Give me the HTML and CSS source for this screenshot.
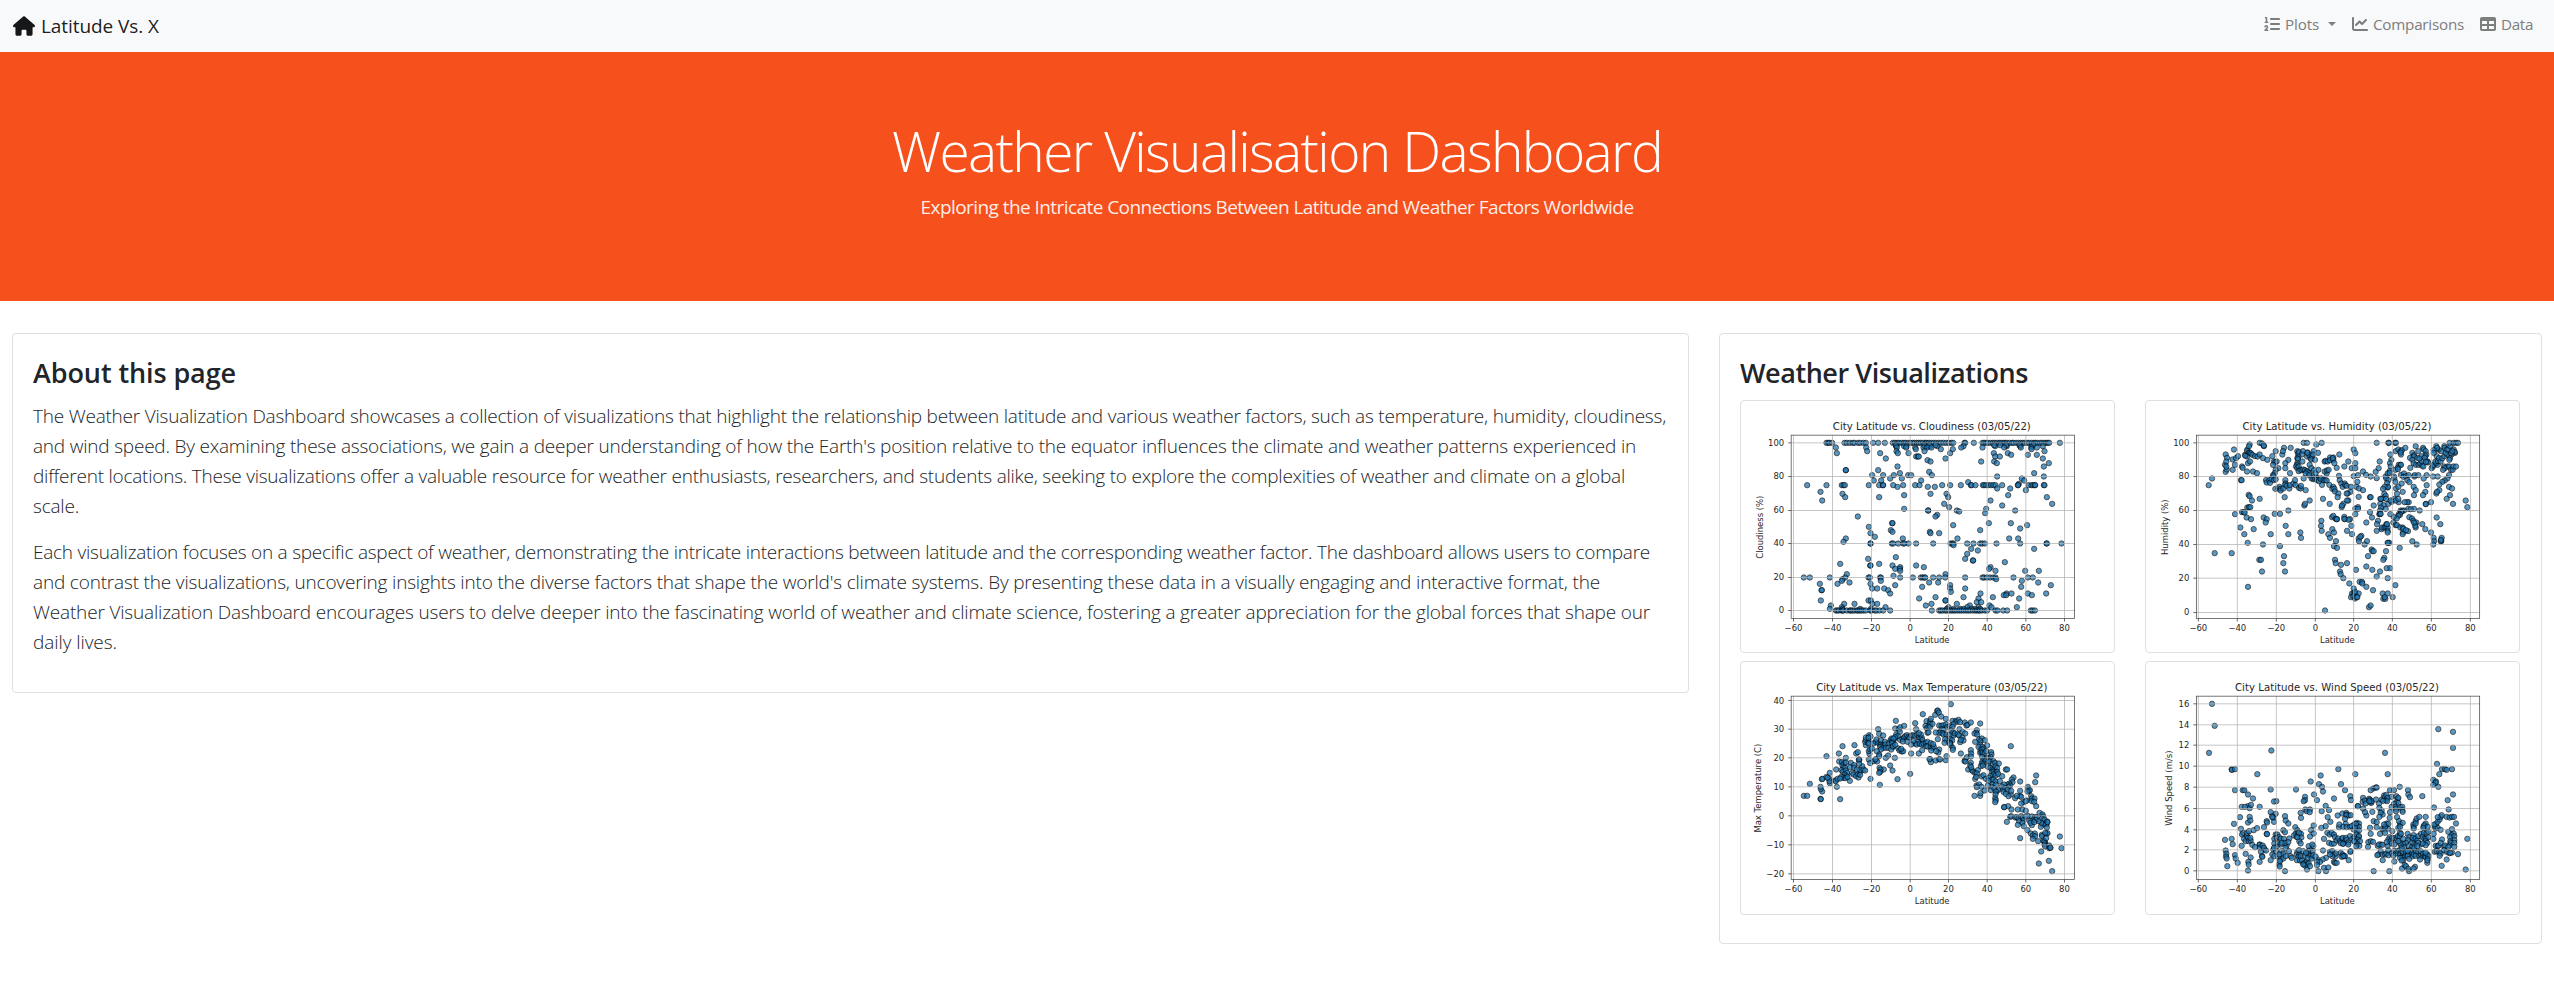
FILE: index.html
```html
<!DOCTYPE html>
<html lang="en">
<head>
<meta charset="utf-8">
<title>Latitude Vs. X</title>
<link rel="stylesheet" href="styles.css">
</head>
<body>
<nav class="navbar">
  <a class="brand"><svg class="icon-home" viewBox="0 0 576 512"><path d="M575.8 255.5c0 18-15 32.1-32 32.1h-32l.7 160.2c0 2.7-.2 5.4-.5 8.1V472c0 22.1-17.9 40-40 40H456c-1.1 0-2.2 0-3.3-.1c-1.4 .1-2.8 .1-4.2 .1H416 392c-22.1 0-40-17.9-40-40V448 384c0-17.7-14.3-32-32-32H256c-17.7 0-32 14.3-32 32v64 24c0 22.1-17.9 40-40 40H160 128.1c-1.5 0-3-.1-4.5-.2c-1.2 .1-2.4 .2-3.6 .2H104c-22.1 0-40-17.9-40-40V360c0-.9 0-1.9 .1-2.8V287.6H32c-18 0-32-14-32-32.1c0-9 3-17 10-24L266.4 8c7-7 15-8 22-8s15 2 21 7L564.8 231.5c8 7 12 15 11 24z"/></svg><span data-w="118">Latitude Vs. X</span></a>
  <div class="links">
    <a class="link"><svg class="icon" viewBox="0 0 512 512"><path d="M24 56c0-13.3 10.7-24 24-24H80c13.3 0 24 10.7 24 24V176h16c13.3 0 24 10.7 24 24s-10.7 24-24 24H40c-13.3 0-24-10.7-24-24s10.7-24 24-24H56V80H48C34.7 80 24 69.3 24 56zM86.7 341.2c-6.5-7.4-18.3-6.9-24 1.2L51.5 357.9c-7.7 10.8-22.7 13.3-33.5 5.6s-13.3-22.7-5.6-33.5l11.1-15.6c23.7-33.2 72.3-35.6 99.2-4.9c21.3 24.4 20.8 60.9-1.1 84.7L86.8 432H120c13.3 0 24 10.7 24 24s-10.7 24-24 24H32c-9.5 0-18.2-5.6-22-14.4s-2.1-18.9 4.3-25.9l72-78c5.3-5.8 5.4-14.6 .3-20.5zM224 64H480c17.7 0 32 14.3 32 32s-14.3 32-32 32H224c-17.7 0-32-14.3-32-32s14.3-32 32-32zm0 160H480c17.7 0 32 14.3 32 32s-14.3 32-32 32H224c-17.7 0-32-14.3-32-32s14.3-32 32-32zm0 160H480c17.7 0 32 14.3 32 32s-14.3 32-32 32H224c-17.7 0-32-14.3-32-32s14.3-32 32-32z"/></svg><span data-w="34">Plots</span><i class="caret"></i></a>
    <a class="link"><svg class="icon" viewBox="0 0 512 512"><path d="M64 64c0-17.7-14.3-32-32-32S0 46.3 0 64V400c0 44.2 35.8 80 80 80H480c17.7 0 32-14.3 32-32s-14.3-32-32-32H80c-8.8 0-16-7.2-16-16V64zm406.6 86.6c12.5-12.5 12.5-32.8 0-45.3s-32.8-12.5-45.3 0L320 210.7l-57.4-57.4c-12.5-12.5-32.8-12.5-45.3 0l-112 112c-12.5 12.5-12.5 32.8 0 45.3s32.8 12.5 45.3 0L240 221.3l57.4 57.4c12.5 12.5 32.8 12.5 45.3 0l128-128z"/></svg><span data-w="91">Comparisons</span></a>
    <a class="link"><svg class="icon" viewBox="0 0 512 512"><path d="M64 256V160H224v96H64zm0 64H224v96H64V320zm224 96V320H448v96H288zM448 256H288V160H448v96zM64 32C28.7 32 0 60.7 0 96V416c0 35.3 28.7 64 64 64H448c35.3 0 64-28.7 64-64V96c0-35.3-28.7-64-64-64H64z"/></svg><span data-w="32">Data</span></a>
  </div>
</nav>
<header class="hero">
  <h1><span data-w="770">Weather Visualisation Dashboard</span></h1>
  <p><span data-w="713">Exploring the Intricate Connections Between Latitude and Weather Factors Worldwide</span></p>
</header>
<main class="columns">
  <section class="card about">
    <h2><span data-w="203">About this page</span></h2>
    <p>
      <span data-w="1633">The Weather Visualization Dashboard showcases a collection of visualizations that highlight the relationship between latitude and various weather factors, such as temperature, humidity, cloudiness,</span><br>
      <span data-w="1603">and wind speed. By examining these associations, we gain a deeper understanding of how the Earth's position relative to the equator influences the climate and weather patterns experienced in</span><br>
      <span data-w="1592">different locations. These visualizations offer a valuable resource for weather enthusiasts, researchers, and students alike, seeking to explore the complexities of weather and climate on a global</span><br>
      <span data-w="46">scale.</span>
    </p>
    <p>
      <span data-w="1617">Each visualization focuses on a specific aspect of weather, demonstrating the intricate interactions between latitude and the corresponding weather factor. The dashboard allows users to compare</span><br>
      <span data-w="1567">and contrast the visualizations, uncovering insights into the diverse factors that shape the world's climate systems. By presenting these data in a visually engaging and interactive format, the</span><br>
      <span data-w="1617">Weather Visualization Dashboard encourages users to delve deeper into the fascinating world of weather and climate science, fostering a greater appreciation for the global forces that shape our</span><br>
      <span data-w="84">daily lives.</span>
    </p>
  </section>
  <section class="card visuals">
    <h2><span data-w="288">Weather Visualizations</span></h2>
    <div class="grid">
      <div class="thumb"><svg id="cloudiness" viewBox="32.5 17.5 1119 754.5"></svg></div>
      <div class="thumb"><svg id="humidity" viewBox="48 17.5 1119 754.5"></svg></div>
      <div class="thumb"><svg id="temperature" viewBox="32.5 22.5 1119 754.5"></svg></div>
      <div class="thumb"><svg id="wind" viewBox="48 22.5 1119 754.5"></svg></div>
    </div>
  </section>
</main>
<script src="charts.js"></script>
</body>
</html>
```
FILE: styles.css
```css
* { box-sizing: border-box; }
body { margin: 0; background: #fff; color: #212529; font-family: "Open Sans", "Noto Sans", sans-serif; font-size: 16px; line-height: 1.5; }
.navbar { height: 52px; padding: 0 21px 0 13px; background: #f8f9fa; display: flex; align-items: center; justify-content: space-between; }
.brand { display: flex; align-items: center; gap: 6px; font-size: 19px; line-height: 30px; color: rgba(0, 0, 0, .9); white-space: nowrap; padding-bottom: 1px; }
.icon-home { width: 22px; height: 20px; fill: #161719; }
.links { display: flex; gap: 16px; padding-bottom: 3px; }
.link { display: flex; align-items: center; gap: 5px; color: #7c7d7d; font-size: 15.2px; white-space: nowrap; }
.icon { width: 16px; height: 16px; fill: currentColor; }
.caret { border: 4px solid transparent; border-top: 4.5px solid currentColor; border-bottom: 0; margin: 0 0 0 4px; }
.hero { height: 249px; background: #f6511d; color: #fff; text-align: center; padding-top: 65px; white-space: nowrap; }
.hero h1 { margin: 0 0 8px; font-size: 55px; font-weight: 300; line-height: 67px; }
.hero p { margin: 0; font-size: 19px; font-weight: 400; line-height: 30px; color: rgba(255, 255, 255, .92); }
.columns { display: flex; align-items: flex-start; gap: 30px; padding: 32px 12px 0; }
.card { border: 1px solid #dfdfdf; border-radius: 4px; padding: 20px; }
.card h2 { margin: 0 0 10.4px; padding-top: 1.6px; font-size: 27px; font-weight: 600; line-height: 33.6px; white-space: nowrap; }
.about { width: 1677px; height: 360px; }
.about p { margin: 0 0 16px; padding-top: 1.5px; height: 120px; font-size: 19px; font-weight: 300; line-height: 30px; white-space: nowrap; }
.visuals { width: 823px; height: 611px; }
.grid { display: grid; grid-template-columns: 375px 375px; column-gap: 30px; row-gap: 8px; }
.thumb { border: 1px solid #dfdfdf; border-radius: 4px; height: 253.5px; display: flex; }
.thumb svg { width: 100%; height: 100%; font-family: "DejaVu Sans", sans-serif; }
.tick { font-size: 25.4px; fill: #262626; }
.title { font-size: 30.4px; fill: #262626; }
.gridline { stroke: #b0b0b0; stroke-width: 2.2; }
.mark { stroke: #333; stroke-width: 2.2; }
.frame { fill: none; stroke: #444; stroke-width: 2.2; }
.dot { fill: #1f77b4; stroke: #000; stroke-width: 2.5; opacity: .75; }
```
FILE: charts.js
```js
document.querySelectorAll('[data-w]').forEach(el => {
  const extra = +el.dataset.w - el.getBoundingClientRect().width;
  el.style.letterSpacing = (extra / el.textContent.length) + 'px';
});

const NS = 'http://www.w3.org/2000/svg';
function add(svg, tag, attrs, text) {
  const el = document.createElementNS(NS, tag);
  for (const k in attrs) el.setAttribute(k, attrs[k]);
  if (text !== undefined) el.textContent = text;
  svg.appendChild(el);
  return el;
}

// Points are rows of "y:x x x".
function byRow(src) {
  const out = [];
  src.trim().split(/\n/).forEach(row => {
    const [y, xs] = row.trim().split(':');
    xs.trim().split(/\s+/).forEach(x => out.push([+x, +y]));
  });
  return out;
}

function chart(id, c) {
  const svg = document.getElementById(id);
  const { left, top, ticksX, ticksY } = c;
  const right = left + 850, bottom = top + 550, mid = left + 422;
  c.points.forEach(([x, y]) => add(svg, 'circle', { cx: x, cy: y, r: 8, class: 'dot' }));
  ticksX.forEach((x, i) => {
    add(svg, 'path', { d: `M${x} ${top}V${bottom}`, class: 'gridline' });
    add(svg, 'path', { d: `M${x} ${bottom}v9`, class: 'mark' });
    add(svg, 'text', { x, y: bottom + 37, 'text-anchor': 'middle', class: 'tick' }, String(-60 + 20 * i).replace('-', '\u2212'));
  });
  ticksY.forEach(([y, label]) => {
    add(svg, 'path', { d: `M${left} ${y}H${right}`, class: 'gridline' });
    add(svg, 'path', { d: `M${left} ${y}h-9`, class: 'mark' });
    add(svg, 'text', { x: left - 21, y: y + 9, 'text-anchor': 'end', class: 'tick' }, label);
  });
  add(svg, 'rect', { x: left, y: top, width: 850, height: 550, class: 'frame' });
  add(svg, 'text', { x: mid, y: top - 16, 'text-anchor': 'middle', textLength: c.titleWidth, class: 'title' }, c.title);
  add(svg, 'text', { x: mid + 1, y: bottom + 73, 'text-anchor': 'middle', class: 'tick' }, 'Latitude');
  add(svg, 'text', { transform: `translate(${c.labelX} ${top + 276}) rotate(-90)`, 'text-anchor': 'middle', class: 'tick' }, c.label);
}

const X1 = [190, 307, 424, 540, 655, 771, 887, 1003];
const X2 = [205, 322, 439, 556, 671, 787, 904, 1021];

chart('cloudiness', {
  left: 183, top: 120, ticksX: X1, labelX: 98, label: 'Cloudiness (%)',
  title: 'City Latitude vs. Cloudiness (03/05/22)', titleWidth: 594,
  ticksY: [[143, '100'], [244, '80'], [346, '60'], [445, '40'], [547, '20'], [646, '0']],
  points: byRow(`
143:289 294 298 306 343 350 359 368 373 384 390 400 407 429 444 464 488 494 501 506 514 521 526 534 541 547 553 560 566 572 579 586 590 596 603 610 617 625 632 640 648 656 664 669 703 705 731 757 762 768 773 781 788 794 801 808 813 820 825 830 838 846 850 858 865 872 878 884 891 897 905 912 916 922 930 936 942 948 953 957 989
153:498 522 529 584 588 593 600 622 700 795 830 870 905 938
150:497 582 598 616 792 810 828 868 910
157:317 408 500 528 555 580 591 604 693 757 822 872 903 920
162:557 632 668 904
168:411 499 583 943
174:320 450 503 535 660 791 833
179:843 893 920
184:558 563 566 795 809
190:467 646 938
195:592
199:601 753 792
204:800 956
214:502 941
225:347 347 444
230:597
234:509 912
240:426 459 491 534 543 605
244:801 941
250:480 515 875
256:431 453 573 882
261:714
266:866
270:231 289 335 340 344 416 447 458 459 489 519 555 568 636 660 692 722 724 736 758 762 768 775 783 790 796 816 863 864 895 904 909 914 915 941 943
275:502 593 614
280:801 840
285:887
290:271
296:337 601 649
300:522 834
306:345 447 654 950
316:276 781
326:642 966
331:816
336:657
341:522 768
346:594 594 680 855
349:687
354:765
359:621
364:383 616
384:486 487 776 842
390:669 891
395:416
400:870
405:482 750
410:487 599
414:421 601 627
425:434
430:347 518 682 837 864
440:340
445:421 421 485 489 504 519 523 535 558 609 661 667 670 711 730 750 756 764 799 870 949 950 994
450:670
461:723 912
466:743
476:711
486:497
491:414 705
496:728 729
501:824
506:330 447
511:420 421 487 558
516:510 581 781
521:495 509 777
527:510 796 885 926
537:350 646
542:490
547:221 239 299 345 415 419 450 452 510 548 572 577 583 585 609 627 645 705 757 762 770 779 789 796 850 893 908
552:337 798
557:335 452 875
562:358 597 624 924
566:269 322 421
570:495 660 962
575:576 873
580:426 441 462 660 705
585:274 275 474
590:662
595:480 751 829 844 893 948
600:821 828 905
606:616 700 788
610:567 745 867
616:272 415 422 646 646
621:740 753
626:342 373 427 441 604 680
631:302 587 719 778
636:335 466 655 711 745 784 860
641:299 337 390 422 650 670 690 700 725 735 750
646:317 321 326 334 337 340 350 359 362 367 373 380 384 389 394 400 407 420 424 434 439 448 459 480 605 627 632 637 645 650 657 663 669 674 681 688 694 701 708 714 720 728 735 740 745 749 755 764 771 796 802 819 831 902 907 914`)
});

// Humidity, temperature and wind points are given as x,y pairs.
const pairs = s => s.trim().split(/\s+/).map(p => p.split(',').map(Number));

chart('humidity', {
  left: 199, top: 120, ticksX: X2, labelX: 113, label: 'Humidity (%)',
  title: 'City Latitude vs. Humidity (03/05/22)', titleWidth: 567,
  ticksY: [[143, '100'], [244, '80'], [346, '60'], [448, '40'], [549, '20'], [652, '0']],
  points: pairs(`
236,270 246,250 254,474 305,474 312,163 287,178 291,188 285,209 289,199 287,230 290,223 289,214 308,193 318,189 324,183 315,209 308,224 336,214 338,218 333,255 335,255 351,229 352,163 359,148 357,153 345,179 351,168 356,173 360,173 363,175 351,184 346,182 367,179 375,183 383,184 389,178 399,189 412,194 389,143 396,145 402,153 401,151 354,204 360,199 369,229 381,234 356,299 359,303 366,316 389,311 352,337 357,336 361,336 336,351 341,351 344,352 315,357 350,367 363,372 401,367 410,372 407,382 331,397 343,417 371,402 353,443 422,417 399,448 388,494 393,494 396,529 354,575
427,183 437,168 432,199 436,201 440,199 429,209 445,219 437,224 434,234 429,240 431,243 408,255 410,262 418,255 420,263 425,252 432,255 437,252 436,281 445,280 448,275 452,281 452,286 460,280 466,255 467,265 464,306 457,178 462,158 459,168 482,158 475,194 466,204 466,219 480,234 465,268 470,272 478,280 480,270 490,265 495,255 497,270 507,278 512,280 513,272 527,285 434,356 450,356 475,346 467,392 475,417 450,453 462,483 460,504 465,529 511,412 513,428 523,331 525,326 539,316 521,143 531,143 575,143 559,148
502,168 504,175 507,170 519,168 516,178 505,184 502,189 504,192 517,199 502,204 501,209 498,214 502,219 506,214 510,224 506,228 514,225 520,223 525,225 530,228 534,229 537,234 521,250 527,235 531,184 533,172 538,180 532,173 542,190 547,184 551,168 549,178 544,193 555,194 564,173 539,209 544,219 552,225 557,234 565,224 548,244 538,240 545,250 550,252 555,251 560,248 566,250 575,250 576,269 561,255 567,258 572,251 581,255 586,255 590,256 590,235 584,229 591,226 596,224 584,199 587,197 593,199 600,187 600,195 610,187 610,194 608,189 613,204 620,218 628,178 643,214 655,199 627,242 629,255 634,265 638,275 644,265 646,270 650,272 661,290 663,275 653,295 650,295 598,269 610,275 607,281 613,281 615,289 625,295 623,306 579,311 599,326 655,316 651,316 640,326 635,336 636,331
671,163 676,174 665,219 676,204 676,219 671,243 684,240 682,260 679,275 687,280 699,285 686,305 720,306 722,306 684,336 676,340 731,331 720,351 676,357 684,341 699,229 708,239 722,244 740,249 737,230 746,219 749,199 740,143 775,143 777,143 795,143 798,143 781,178 784,194 780,204 782,214 779,228 767,244 769,250 775,255 773,235 779,233 792,244 793,250 796,260 771,264 773,277 774,275 764,275 759,281 763,296 767,302 758,310 768,311 751,311 753,311 751,326 761,330 767,341 775,326 785,320 793,311 782,316 806,321 797,316 805,311 801,296 798,280 805,275 815,265 813,239 822,235 820,245 828,243 836,240 832,255 838,261 853,244 854,240 865,240 818,290 806,209 811,209 813,209 803,218 796,224 804,222 797,168 805,163 812,168 813,178 816,165 826,158 812,172 857,153 865,168 847,173 852,180 840,188 852,184 847,194 862,188 851,204 858,209 841,218 866,209 871,205 876,199 877,212 880,214 879,158 881,163 887,168 889,178 886,183 893,199 894,202 875,183 868,190 884,188 888,200 890,240 881,250 909,244 923,244 905,219 909,214 911,209 923,209 918,204 916,199 924,198 920,183 927,189 932,199 937,189 943,183 952,178 947,173 933,168 926,163 920,163 919,153 921,158 911,165 911,173 943,153 944,158 950,163 955,163 961,153 971,163 975,173 974,170 965,178 960,189 958,194 963,174 967,168 959,143 971,143 978,143 984,143 952,214 942,214 944,219 939,224 958,214 963,224 968,224 970,214 978,214 957,240 952,250 944,256 937,260 928,268 928,285 919,295 921,290 890,270 851,275 857,285 886,290 879,300 852,300 957,275 966,280 960,300 950,311 969,326 1007,316 1012,336 903,321 888,326 887,327 836,321 831,321 824,321 852,341 869,346 835,341 842,342 822,346 812,346 817,347 813,351 807,356 810,359 805,362 800,370 791,365 790,382 797,390 781,357 753,337 750,346 748,357 750,357 752,356 744,377 741,387 740,407 755,402 756,397 763,397 767,395 773,397 769,387 773,407 773,412 771,387 801,390 811,397 818,397 819,412 818,417 834,408 820,401 828,405 838,366 846,370 850,377 855,385 859,382 857,397 856,392 852,382 877,387 886,402 903,412 911,428 912,438 910,448 920,367 931,387 935,428 934,438 932,438 933,434 860,448 847,438 809,458
606,366 610,362 617,371 621,372 620,372 643,365 644,372 660,372 656,374 643,371 574,377 573,392 575,407 607,402 612,412 595,417 600,428 618,438 612,453 621,458 651,407 664,392 666,417 709,382 726,367 694,422 686,430 687,438 691,425 711,438 704,448 725,463 727,468 731,468 714,483 768,468 763,488 760,494 774,443 778,443 773,443 615,494 617,504 633,509 651,504 630,529 632,537 640,549 658,565 671,580 678,524 709,514 727,524 750,529 740,544 773,549 780,519 770,519 796,570 689,560 696,560 697,565 709,575 729,585 666,595 671,595 676,595 686,595 663,606 670,603 675,610 680,606 682,606 675,590 758,595 773,595 760,611 766,611 764,606 788,606 585,646 717,636 722,631`)
});

chart('temperature', {
  left: 183, top: 125, ticksX: X1, labelX: 92, label: 'Max Temperature (C)',
  title: 'City Latitude vs. Max Temperature (03/05/22)', titleWidth: 694,
  ticksY: [[138, '40'], [224, '30'], [310, '20'], [397, '10'], [484, '0'], [571, '\u221210'], [658, '\u221220']],
  points: pairs(`
221,424 231,424 239,388 289,305 271,433 272,434 276,411 272,404 271,397 275,374 277,373 289,367 299,355 298,373 299,386 298,380 292,370 315,378 317,380 318,345 320,397 330,434 322,373 327,321 326,297 337,275 373,272 347,310 335,323 342,326 337,333 340,338 345,340 334,347 338,352 347,348 351,355 343,360 349,365 339,370 345,371 359,379 352,368 333,367 330,372 347,324 362,325 360,338 372,332 372,340 366,355 370,360 378,365 385,369 384,358 390,352 396,335 387,315 389,347 380,345 400,345 405,348 390,361 378,297 383,293 386,316 387,317 387,328 416,315 420,326 421,373 418,298 416,290 420,285 407,272 405,262 407,256 416,256 407,249 417,242 421,246 415,250 414,265 416,267 425,282 431,266 437,262 444,265 450,271 454,268 459,273 450,277 459,280 452,285 440,290 447,300 447,305 431,320 437,316 441,321 436,314 467,310 474,303 494,310 480,333 487,348 461,345 448,340 451,345 450,352 447,355 449,391 502,374 540,358 543,297 566,297 444,224 447,238 459,243 439,255 452,257 464,262 466,270 467,280 475,280 477,266 481,257 484,252 486,260 489,265 494,253 498,240 495,222 497,199 506,224 510,218 522,214 509,232 503,245 495,248 490,252 485,266 488,278 483,285 488,275 495,271 505,282 508,288 515,291 519,290 513,283 510,256 517,253 521,249 525,245 530,242 518,261 535,247 538,250 543,243 549,242 555,244 561,240 566,248 570,252 575,250 577,257 563,262 555,267 550,260 532,262 543,270 560,270 569,268 575,270 580,267 587,265 592,262 588,275 592,276 602,278 607,280 611,277 602,266 609,269 576,287 603,288 572,240 566,236 558,224 555,206 578,179 589,200 600,200 602,193 600,208 586,214 590,221 595,217 600,217 592,235 595,233 615,181 621,169 623,168 626,174 633,186 647,193 607,208 627,213 634,214 640,212 648,210 650,218 635,224 640,226 629,232 627,236 637,236 640,240 649,240 617,234 623,254 662,149 667,199 677,199 680,202 685,196 690,203 670,209 658,215 667,217 663,228 669,234 658,242 670,243 674,237 683,240 687,243 688,224 697,232 705,237 697,250 700,258 690,263 692,256 661,254 666,258 660,265 662,273 668,280 668,286 659,267 650,258 645,254 643,265 627,285 624,294 618,290 704,204 709,213 712,211 722,204 750,207 740,227 738,234 733,237 741,240 600,314 602,323 598,314 617,318 627,314 630,315 647,317 649,305 692,297 705,316 703,320 706,321 710,308 722,287 723,297 722,306 722,325 720,333 714,345 725,347 729,351 735,355 743,347 740,357 735,373 723,338 738,367 755,366 760,362 767,373
747,254 755,252 751,260 735,262 764,257 771,273 750,271 745,277 757,277 761,282 751,287 757,285 750,295 754,293 758,295 763,297 768,290 783,293 784,300 781,308 775,311 769,310 762,313 756,307 757,320 765,320 760,327 755,327 752,335 758,333 775,320 779,321 790,320 788,328 795,325 806,327 842,275 773,337 780,340 787,344 792,345 796,336 801,341 785,352 790,352 795,356 801,352 790,360 797,363 804,358 780,365 776,370 785,376 775,379 790,375 796,381 809,380 787,390 797,391 784,397 782,407 793,402 800,410 805,405 797,411 796,420 795,431 797,437 795,443 733,424 750,424 751,416 739,393 747,390 754,397 763,408 740,398 773,393 816,365 827,345 831,345 850,369 845,375 847,383 838,387 832,390 840,393 835,397 822,390 815,396 819,404 826,401 832,406 820,412 827,418 842,420 835,425 843,409 870,381 855,431 870,409 870,425 873,427 860,424 918,363 915,383 893,397 893,403 897,409 899,407 892,411 903,425 905,432 913,432 905,440 912,442 889,438 881,443 873,447 887,440 918,455 822,458 834,455 822,458 844,465 863,465 877,465 887,469 830,502 840,487 843,485 855,489 859,488 865,491 867,500 863,511 873,485 878,490 882,496 887,487 877,505 881,515 892,527 870,551 893,484 905,486 914,488 919,488 928,475 937,480 939,486 935,492 943,495 951,501 942,508 949,510 952,503 950,519 938,510 932,517 933,505 925,500 916,496 907,498 900,500 905,512 901,505 912,503 902,537 914,537 908,543 915,545 908,553 924,560 935,541 936,545 949,538 952,536 940,558 944,563 944,565 942,561 943,570 945,576 957,573 957,581 960,579 961,580 933,591 989,546 994,581 956,619 926,627 966,650 948,551 945,535`)
});

chart('wind', {
  left: 199, top: 125, ticksX: X2, labelX: 127, label: 'Wind Speed (m/s)',
  title: 'City Latitude vs. Wind Speed (03/05/22)', titleWidth: 612,
  ticksY: [[148, '16'], [211, '14'], [272, '12'], [335, '10'], [398, '8'], [462, '6'], [526, '4'], [586, '2'], [649, '0']],
  points: pairs(`
246,148 254,214 237,295 424,288 305,345 306,346 315,344 382,359 315,407 338,407 343,407 354,420 369,432 498,405 422,405 542,381 572,363 625,344 676,359 765,295 773,359 567,389 576,397 579,411 552,420 633,389 645,407 612,432 925,224 969,232 969,280 921,328 936,344 945,344 950,346 966,344 928,359 910,376 918,381 917,385 910,391 925,397 969,420 953,437 956,465 912,459
285,556 305,553 308,569 312,508 287,588 289,598 288,606 290,612 292,635 315,602 317,612 323,625 330,488 333,523 336,540 335,574 342,553 340,535 351,545 347,560 354,550 356,560 362,558 351,535 357,530 361,550 347,598 362,609 355,622 356,630 354,648 367,571 375,578 389,570 389,622 371,527 381,521 402,518 410,500 411,504 410,538 411,539 389,457 354,455 359,461 363,451 335,457 345,457 354,504 359,487 361,498 389,571 390,580 398,573 403,585 393,592 396,605 397,607 402,580 408,588 422,617 422,473 437,478 427,485 430,490 432,502 427,488 439,440 432,441 525,427 525,437 561,437 521,440 437,540 442,540 433,553 440,550 447,548 452,553 433,567 444,567 452,570 440,577 430,585 427,600 433,605 445,606 438,590 432,580 455,590 460,597 448,600 452,615 460,612 448,630 449,636 450,620 465,650 465,485 467,498 475,507 460,527 465,533 462,553 478,552 470,573 467,580 477,590 467,605 482,605 485,610 465,565 475,563 455,565 502,592 500,600 508,600 505,607 512,605 507,587 501,617 510,618 516,618 520,628 525,625 530,622 530,630 525,633 536,627 520,630 531,645 540,635 525,605 536,600 543,605 535,590 540,585 536,575 548,590 550,575 547,570 520,590 528,595 533,611 545,612 550,602 496,518 502,527 497,537 505,533 492,543 500,547 513,538 514,549 508,560 502,548 507,535 512,567 551,513 543,527 551,537 540,546 512,475 513,490 526,465 530,470 540,465 539,473 575,470 587,454 597,467 593,488 601,502 587,515 574,520 592,535 599,540 605,535 612,540 615,548 582,553 597,565 605,568 612,567 620,558 625,552 630,560 637,553 638,550 645,560 640,567 632,566 648,550 650,556 655,564 655,570 639,568 579,588 600,592 607,590 612,600 617,605 617,597 607,605 600,600 588,610 578,615 562,615 570,622 561,622 557,606 561,632 565,650 588,650 582,640 595,639 612,622 615,625 620,625 632,595 638,600 642,605 635,607 645,605 656,617 662,590 640,605 661,592
661,425 663,437 683,455 684,455 699,430 698,442 705,438 707,447 717,433 720,435 722,444 724,445 725,440 718,440 730,402 738,399 740,399 722,407 709,483 705,473 699,462 727,472 731,500 740,503 740,518 738,435 747,447 748,460 755,435 762,423 765,428 769,421 768,437 773,430 771,440 759,439 780,407 792,407 785,427 799,425 803,433 805,430 799,443 805,445 809,397 834,407 835,420 840,428 877,425 785,457 792,448 796,457 798,463 811,458 817,457 817,467 818,472 798,470 755,468 758,480 752,475 748,487 780,473 779,490 801,488 623,483 637,477 649,475 650,480 656,483 649,482 662,482 645,493 647,508 627,518 628,510 640,517 650,518 660,517 672,510 680,505 687,507 680,515 687,517 671,525 680,530 687,528 665,515 678,508 675,520 660,545 667,553 673,547 680,540 686,547 687,545 683,555 690,560 676,562 682,569 688,574 672,560 678,575 714,577 715,563 722,560 729,562 720,520 722,538 750,538 757,523 763,525 768,515 774,522 770,507 775,508 765,535 765,517 762,510 787,530 779,548 775,555 781,560 787,550 793,551 800,553 803,545 773,574 770,563 785,567 793,570 752,570 743,574 747,570 757,571 752,590 745,600 742,602 758,600 765,600 769,597 775,588 775,602 785,596 792,589 798,597 790,603 803,590 808,587 813,592 810,600 816,605 820,600 825,602 818,592 828,592 835,600 833,605 818,610 820,617 810,610 815,618 838,613 845,595 848,605 852,600 858,590 857,604 865,592 868,605 873,600 872,590 878,605 880,597 885,605 887,608 892,600 895,605 887,595 893,614 892,625 892,618 870,615 793,621 758,617 731,650 778,650 816,642 824,632 828,635 837,650 835,643 855,637 851,642 809,545 810,535 813,538 805,520 810,508 807,500 818,505 810,517 850,510 851,517 851,522 857,500 857,507 860,492 868,487 887,487 887,507 881,515 883,512 893,517 880,520 833,538 838,548 834,557 828,565 819,567 823,578 815,580 812,570 809,565 820,553 805,560 836,575 840,587 833,590 847,576 853,570 853,580 847,562 852,555 851,542 848,550 857,552 863,557 865,545 873,538 878,547 883,553 888,553 895,548 882,535 890,535 895,532 887,560 892,565 887,572 872,570 865,565 878,567 862,575 910,553 911,538 917,522 915,517 918,509 923,520 913,510 932,526 923,502 929,495 932,487 935,482 923,488 950,487 959,489 966,487 972,487 978,507 955,532 966,524 971,537 965,542 960,548 973,545 973,557 961,560 962,565 973,565 958,573 973,577 936,555 917,574 923,575 926,573 932,565 943,577 945,573 955,577 914,592 920,590 928,593 932,597 929,604 942,587 950,592 958,596 966,594 984,599 950,615 935,634 1007,645 1012,553 961,595`)
});
```
